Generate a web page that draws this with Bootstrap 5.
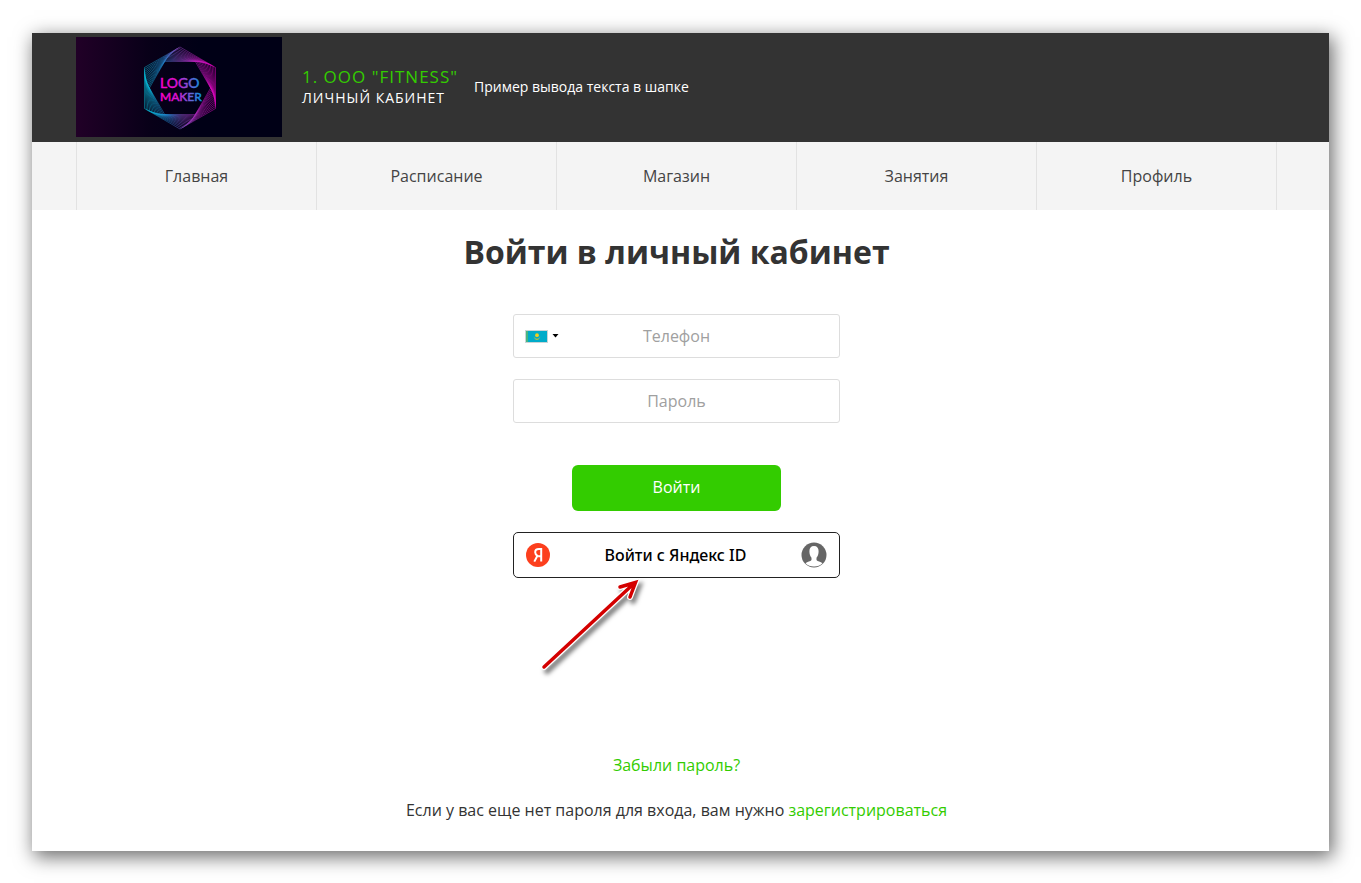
<!DOCTYPE html>
<html lang="ru">
<head>
<meta charset="utf-8">
<meta name="viewport" content="width=device-width, initial-scale=1">
<title>Личный кабинет</title>
<link href="https://cdn.jsdelivr.net/npm/bootstrap@5.3.0/dist/css/bootstrap.min.css" rel="stylesheet">
<style>
  body { font-family: "Open Sans", "Noto Sans", sans-serif; font-size: 16px; line-height: 24px; color: #333; background: #fff; padding: 33px 32px 32px; }
  .sheet { min-height: calc(100vh - 65px); background: #fff; box-shadow: 3px 5px 18px 1px rgba(0, 0, 0, .58); }
  .inset { padding-left: 44px; padding-right: 52px; }
  .topbar { background: #333; min-height: 109px; padding-top: 4px; padding-bottom: 5px; color: #fff; }
  .brand-logo { width: 206px; height: 100px; }
  .brand-name { font-size: 17px; line-height: 22px; letter-spacing: 1px; color: #3c0; }
  .brand-sub { font-size: 14px; line-height: 20px; letter-spacing: 1px; }
  .head-note { font-size: 14px; }
  .mainmenu { background: #f4f4f4; }
  .mainmenu .nav { border-left: 1px solid #e2e2e2; }
  .mainmenu .nav-item { flex: 1 1 0; min-width: 0; border-right: 1px solid #e2e2e2; }
  .mainmenu .nav-link { padding: 22px 8px; color: #444; }
  .content { padding-top: 22px; padding-bottom: 22px; }
  .gap-one { margin-top: 21px; }
  .gap-two { margin-top: 42px; }
  h1 { font-size: 32px; line-height: 40px; font-weight: 700; }
  .login-box { width: 327px; max-width: 100%; }
  .login-box .form-control { height: 44px; border-color: #ddd; border-radius: 3px; font-size: 16px; }
  .login-box .form-control::placeholder { color: #a0a0a0; }
  .flag-btn { top: 0; left: 0; height: 44px; padding: 0 12px; gap: 4px; }
  .login-btn { width: 209px; height: 46px; border-radius: 6px; background: #3c0; color: #fff; padding-bottom: 8px; }
  .login-btn:hover { background: #2db300; color: #fff; }
  .yandex-btn { height: 46px; border: 1px solid #222; border-radius: 5px; background: #fff; padding: 0 12px; color: #000; font: 500 16px/24px "Noto Sans", "Open Sans", sans-serif; }
  .pointer { top: 39px; left: 20px; overflow: visible; filter: drop-shadow(3px 4px 2px rgba(0, 0, 0, .5)); pointer-events: none; }
  .sheet a.green { color: #3c0; text-decoration: none; }
  .help { margin-top: 175px; }
</style>
</head>
<body>
<div class="sheet">
  <header class="topbar inset d-flex align-items-center">
    <svg class="brand-logo flex-shrink-0" viewBox="0 0 206 100" role="img" aria-label="Logo Maker">
      <defs>
        <linearGradient id="back"><stop offset="0" stop-color="#210027"/><stop offset=".36" stop-color="#080018"/><stop offset=".6" stop-color="#000016"/></linearGradient>
        <linearGradient id="ring" gradientUnits="userSpaceOnUse" x1="68" y1="54" x2="140" y2="48"><stop offset="0" stop-color="#00c8e0"/><stop offset=".3" stop-color="#2387d2"/><stop offset=".5" stop-color="#8a50c8"/><stop offset=".75" stop-color="#c81fc4"/><stop offset="1" stop-color="#f000c8"/></linearGradient>
        <linearGradient id="word" gradientUnits="userSpaceOnUse" x1="84" y1="0" x2="124" y2="0"><stop offset="0" stop-color="#ff00c8"/><stop offset=".4" stop-color="#e010d0"/><stop offset=".75" stop-color="#7060d8"/><stop offset="1" stop-color="#1090e0"/></linearGradient>
      </defs>
      <rect width="206" height="100" fill="url(#back)"/>
      <g id="hexes" fill="none" stroke="url(#ring)" stroke-width=".6" stroke-opacity=".8"></g>
      <g fill="url(#word)" stroke="url(#word)" stroke-width=".5" font-family="Lato, sans-serif">
        <text x="84" y="51" font-size="14">LOGO</text>
        <text x="84" y="64" font-size="12">MAKER</text>
      </g>
    </svg>
    <div class="ms-3 ps-1">
      <div class="brand-name">1. ООО "FITNESS"</div>
      <div class="brand-sub">ЛИЧНЫЙ КАБИНЕТ</div>
    </div>
    <div class="head-note ms-3">Пример вывода текста в шапке</div>
  </header>

  <nav class="mainmenu inset">
    <ul class="nav flex-nowrap text-center">
      <li class="nav-item"><a class="nav-link" href="#">Главная</a></li>
      <li class="nav-item"><a class="nav-link" href="#">Расписание</a></li>
      <li class="nav-item"><a class="nav-link" href="#">Магазин</a></li>
      <li class="nav-item"><a class="nav-link" href="#">Занятия</a></li>
      <li class="nav-item"><a class="nav-link" href="#">Профиль</a></li>
    </ul>
  </nav>

  <main class="content inset text-center">
    <h1 class="mb-0">Войти в личный кабинет</h1>
    <form class="login-box mx-auto gap-two">
      <div class="position-relative">
        <input class="form-control text-center" type="tel" placeholder="Телефон" aria-label="Телефон">
        <button type="button" class="flag-btn btn border-0 position-absolute d-flex align-items-center" aria-label="Страна: Казахстан">
          <svg width="23" height="13" viewBox="0 0 23 13" aria-hidden="true"><rect x=".5" y=".5" width="22" height="12" fill="#00abc9" stroke="#c9d4d6"/><path d="M2 1v11" stroke="#5cb870" stroke-width="1.6"/><circle cx="12" cy="5.2" r="1.9" fill="#f3cf1c"/><path d="M8.500 6.500q3.500 4.500 7 0q-1.500 3.500-3.500 3.500t-3.500-3.500z" fill="#b8bd40"/></svg>
          <svg width="7" height="4" viewBox="0 0 7 4" aria-hidden="true"><path d="M.5 0h6l-3 3.500z" fill="#000"/></svg>
        </button>
      </div>
      <input class="form-control text-center gap-one" type="password" placeholder="Пароль" aria-label="Пароль">
      <button type="submit" class="login-btn btn border-0 gap-two">Войти</button>
      <div class="position-relative gap-one">
        <button type="button" class="yandex-btn w-100 d-flex align-items-center justify-content-between">
          <svg width="24" height="24" viewBox="0 0 24 24" aria-hidden="true"><circle cx="12" cy="12" r="12" fill="#fc3f1d"/><path d="M15.200 18.600V6.100h-2.300c-2.400 0-3.700 1.300-3.700 3.200 0 1.600.8 2.500 2.200 3.500L8.300 18.600M15.200 13.300h-3" fill="none" stroke="#fff" stroke-width="2"/></svg>
          <span>Войти с Яндекс ID</span>
          <svg width="26" height="26" viewBox="0 0 26 26" aria-hidden="true"><circle cx="13" cy="13" r="12.500" fill="#666"/><path d="M13 4c3.100 0 4.600 2 4.600 5.200 0 2.900-.8 5.200-2.100 6.500v2.300c.8 1.500 4.300 1.600 6 3.200A12 12 0 0 1 13 24.500a12 12 0 0 1-8.500-3.300c1.700-1.600 5.200-1.700 6-3.200v-2.300C9.200 14.400 8.400 12.100 8.400 9.200 8.400 6 9.900 4 13 4z" fill="#fff"/></svg>
        </button>
        <svg class="pointer position-absolute" width="110" height="104" viewBox="0 0 110 104" fill="none" stroke-linecap="round" aria-hidden="true">
          <path d="M11 96 101.500 12M87 16l15.500-4.500L97 26" stroke="#fff" stroke-width="6"/>
          <path d="M11 96 101.500 12M87 16l15.500-4.500L97 26" stroke="#d40000" stroke-width="3.500"/>
        </svg>
      </div>
    </form>
    <p class="help mb-0"><a class="green" href="#">Забыли пароль?</a></p>
    <p class="gap-one mb-0">Если у вас еще нет пароля для входа, вам нужно <a class="green" href="#">зарегистрироваться</a></p>
  </main>
</div>
<script src="https://cdn.jsdelivr.net/npm/bootstrap@5.3.0/dist/js/bootstrap.bundle.min.js"></script>
<script>
  // Whirl of nested hexagons in the logo: each turns a little and touches the one outside it.
  const group = document.getElementById('hexes');
  let radius = 41;
  for (let step = 0; step <= 12; step++) {
    const points = [];
    for (let corner = 0; corner < 6; corner++) {
      const angle = (corner * 60 - 90 - step * 2.5) * Math.PI / 180;
      points.push((104 + radius * Math.cos(angle)).toFixed(2) + ',' + (51 + radius * Math.sin(angle)).toFixed(2));
    }
    const shape = document.createElementNS('http://www.w3.org/2000/svg', 'polygon');
    shape.setAttribute('points', points.join(' '));
    group.appendChild(shape);
    radius *= 0.976;
  }
</script>
</body>
</html>
